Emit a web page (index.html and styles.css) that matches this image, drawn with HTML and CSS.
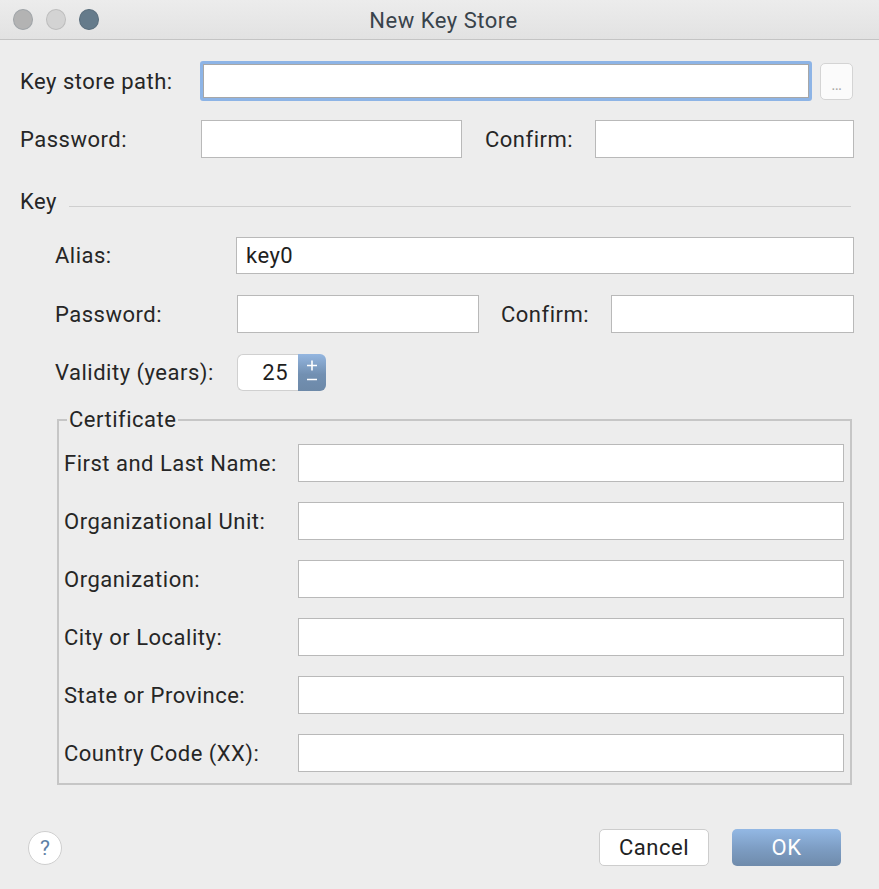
FILE: index.html
```html
<!DOCTYPE html>
<html>
<head>
<meta charset="utf-8">
<link rel="stylesheet" href="styles.css">
</head>
<body>
<div class="window">
  <div class="titlebar">
    <div class="lights">
      <span class="light close"></span>
      <span class="light min"></span>
      <span class="light max"></span>
    </div>
    <div class="title">New Key Store</div>
  </div>
  <div class="content">
    <div class="row row-path">
      <label class="lbl w-path">Key store path:</label>
      <div class="field focus path-field"></div>
      <div class="browse">…</div>
    </div>
    <div class="row row-pw">
      <label class="lbl w-path">Password:</label>
      <div class="field pw1"></div>
      <label class="lbl w-confirm1">Confirm:</label>
      <div class="field pw2"></div>
    </div>
    <div class="section">
      <span class="section-title">Key</span>
      <span class="section-line"></span>
    </div>
    <div class="key">
      <div class="row row-alias">
        <label class="lbl w-key">Alias:</label>
        <div class="field alias">key0</div>
      </div>
      <div class="row row-kpw">
        <label class="lbl w-key">Password:</label>
        <div class="field kpw1"></div>
        <label class="lbl w-confirm2">Confirm:</label>
        <div class="field kpw2"></div>
      </div>
      <div class="row row-valid">
        <label class="lbl w-key">Validity (years):</label>
        <div class="spinner">
          <div class="spin-value">25</div>
          <div class="spin-btn">
            <svg width="28" height="37" viewBox="0 0 28 37">
              <path d="M14 6.5v10M9 11.5h10" stroke="#fff" stroke-width="1.6" fill="none"/>
              <path d="M9 25.5h10" stroke="#fff" stroke-width="1.6" fill="none"/>
            </svg>
          </div>
        </div>
      </div>
      <fieldset class="cert">
        <legend>Certificate</legend>
        <div class="cert-row"><label class="lbl w-cert">First and Last Name:</label><div class="field cert-field"></div></div>
        <div class="cert-row"><label class="lbl w-cert">Organizational Unit:</label><div class="field cert-field"></div></div>
        <div class="cert-row"><label class="lbl w-cert">Organization:</label><div class="field cert-field"></div></div>
        <div class="cert-row"><label class="lbl w-cert">City or Locality:</label><div class="field cert-field"></div></div>
        <div class="cert-row"><label class="lbl w-cert">State or Province:</label><div class="field cert-field"></div></div>
        <div class="cert-row"><label class="lbl w-cert">Country Code (XX):</label><div class="field cert-field"></div></div>
      </fieldset>
    </div>
    <div class="footer">
      <div class="help">?</div>
      <div class="buttons">
        <div class="btn cancel">Cancel</div>
        <div class="btn ok">OK</div>
      </div>
    </div>
  </div>
</div>
</body>
</html>
```
FILE: styles.css
```css
html, body {
  margin: 0;
  padding: 0;
  background: #ededed;
}
body {
  font-family: Roboto, "Liberation Sans", Arial, sans-serif;
  font-size: 22px;
  letter-spacing: 0.5px;
  color: #262626;
}
.window {
  width: 879px;
  height: 889px;
  background: #ededed;
  overflow: hidden;
}
.titlebar {
  height: 40px;
  box-sizing: border-box;
  border-bottom: 1px solid #c4c4c4;
  background: linear-gradient(#ececec, #e2e2e2);
  display: flex;
  align-items: center;
  justify-content: center;
  position: relative;
}
.lights {
  position: absolute;
  left: 13px;
  top: 9px;
  display: flex;
  gap: 13px;
}
.light {
  width: 20px;
  height: 21px;
  border-radius: 50%;
  box-sizing: border-box;
}
.light.close { background: #b3b3b3; border: 1px solid #9fa4a8; }
.light.min { background: #d3d3d3; border: 1px solid #bdbdbd; }
.light.max { background: #657b8b; border: 1px solid #5a6e7d; }
.title {
  font-size: 22px;
  color: #39434b;
  padding-left: 8px;
  padding-top: 2px;
}
.content {
  padding: 21px 25px 0 20px;
}
.row {
  display: flex;
  align-items: center;
}
.lbl {
  display: block;
  white-space: nowrap;
  flex: none;
}
.field {
  flex: none;
  box-sizing: border-box;
  background: #fff;
  border: 1px solid #b9b9b9;
  height: 38px;
}
.w-path { width: 181px; }
.row-path { height: 40px; }
.path-field {
  width: 612px;
  height: 40px;
  border: 3px solid #8db4e6;
  border-radius: 3px;
  margin-left: -1px;
  box-shadow: inset 0 0 0 1px #a7a7a7;
}
.browse {
  width: 33px;
  height: 37px;
  margin-left: 8px;
  box-sizing: border-box;
  border: 1px solid #d4d4d4;
  border-radius: 5px;
  background: #fbfbfb;
  color: #a8a8a8;
  font-size: 16px;
  letter-spacing: 0;
  display: flex;
  align-items: flex-end;
  justify-content: center;
  padding-bottom: 5px;
}
.row-pw { margin-top: 19px; height: 38px; }
.pw1 { width: 261px; }
.w-confirm1 { width: 133px; padding-left: 23px; box-sizing: border-box; }
.pw2 { width: 259px; }
.section {
  display: flex;
  align-items: center;
  margin-top: 23px;
  height: 40px;
}
.section-title { flex: none; }
.section-line {
  flex: 1;
  height: 1px;
  background: #cfcfcf;
  margin-left: 12px;
  margin-top: 10px;
  margin-right: 3px;
}
.key {
  padding-left: 35px;
}
.row-alias { margin-top: 16px; height: 37px; }
.w-key { width: 181px; }
.alias {
  width: 618px;
  height: 37px;
  padding-left: 9px;
  line-height: 35px;
  color: #1e1e1e;
}
.row-kpw { margin-top: 21px; height: 38px; }
.kpw1 { width: 242px; margin-left: 1px; }
.w-confirm2 { width: 132px; padding-left: 22px; box-sizing: border-box; }
.kpw2 { width: 243px; }
.row-valid { margin-top: 21px; height: 37px; }
.spinner {
  display: flex;
  margin-left: 1px;
  height: 37px;
}
.spin-value {
  width: 61px;
  box-sizing: border-box;
  background: #fff;
  border: 1px solid #d0d0d0;
  border-right: none;
  border-radius: 6px 0 0 6px;
  text-align: right;
  padding-right: 10px;
  line-height: 35px;
  color: #1e1e1e;
}
.spin-btn {
  width: 28px;
  height: 37px;
  border-radius: 0 6px 6px 0;
  background: linear-gradient(#94b6e0, #7290b2 55%, #6d89a8);
  overflow: hidden;
}
.spin-btn svg { display: block; }
.cert {
  margin: 17px 0 0 2px;
  width: 795px;
  box-sizing: border-box;
  border: 2px solid #c6c6c6;
  padding: 12px 8px 11px 5px;
  min-inline-size: 0;
}
.cert legend {
  padding: 0 2px;
  margin-left: 3px;
  line-height: 24px;
}
.cert-row {
  display: flex;
  align-items: center;
  height: 38px;
  margin-bottom: 20px;
}
.cert-row:last-child { margin-bottom: 0; }
.w-cert { width: 234px; }
.cert-field { width: 546px; }
.footer {
  display: flex;
  align-items: center;
  justify-content: space-between;
  margin-top: 44px;
  padding-right: 13px;
}
.help {
  width: 34px;
  height: 34px;
  margin-left: 8px;
  border-radius: 50%;
  box-sizing: border-box;
  border: 1px solid #cfcfcf;
  background: #fff;
  color: #5d7fa6;
  font-size: 21px;
  letter-spacing: 0;
  display: flex;
  align-items: center;
  justify-content: center;
}
.buttons {
  display: flex;
  gap: 23px;
}
.btn {
  width: 110px;
  height: 37px;
  box-sizing: border-box;
  border-radius: 5px;
  display: flex;
  align-items: center;
  justify-content: center;
}
.cancel {
  background: #fff;
  border: 1px solid #cdcdcd;
  color: #222;
}
.ok {
  width: 109px;
  background: linear-gradient(#93b8e4, #7c9cc2 55%, #6f8bab);
  color: #fff;
}
```
